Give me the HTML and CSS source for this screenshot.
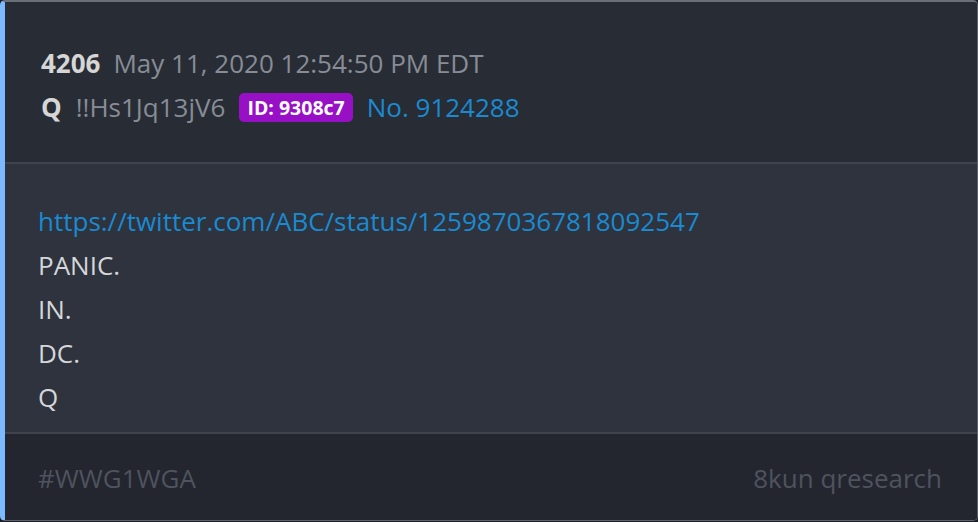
FILE: index.html
```html
<!DOCTYPE html>
<html lang="en">
<head>
  <meta charset="UTF-8" />
  <title>Q Drop 4206</title>
  <meta name="viewport" content="width=device-width, initial-scale=1" />
  <link rel="stylesheet" href="styles.css">
</head>
<body>

  <article class="drop">
    <header class="drop-head">
      <div class="fila">
        <span class="numero">4206</span>
        <span class="fecha">May 11, 2020 12:54:50 PM EDT</span>
      </div>
      <div class="fila">
        <span class="autor">Q</span>
        <span class="trip">!!Hs1Jq13jV6</span>
        <span class="id-badge">ID: 9308c7</span>
        <a class="post-no" href="#">No. 9124288</a>
      </div>
    </header>

    <section class="drop-body">
      <p><a href="#">https://twitter.com/ABC/status/1259870367818092547</a></p>
      <p>PANIC.</p>
      <p>IN.</p>
      <p>DC.</p>
      <p>Q</p>
    </section>

    <footer class="drop-foot">
      <span>#WWG1WGA</span>
      <span>8kun qresearch</span>
    </footer>
  </article>

</body>
</html>
```

FILE: styles.css
```css
body {
  margin: 0;
  background: #1c1f25;
  font-family: "Open Sans", sans-serif;
  font-size: 26px;
  line-height: 44px;
}
.drop {
  width: 978px;
  height: 521px;
  box-sizing: border-box;
  border: 1px solid #5c616b;
  border-top: 2px solid #6a6f79;
  border-left: 5px solid #7cb9ff;
  border-radius: 5px;
  overflow: hidden;
  display: flex;
  flex-direction: column;
}
.drop-head {
  background: #282c34;
  padding: 39px 36px 33px;
  border-bottom: 2px solid #3e434d;
}
.fila {
  display: flex;
  align-items: center;
}
.numero {
  font-weight: bold;
  color: #d6d6d6;
  margin-right: 13px;
}
.fecha {
  color: #878c97;
}
.autor {
  font-weight: bold;
  color: #d6d6d6;
  margin-right: 14px;
}
.trip {
  color: #878c97;
  margin-right: 14px;
}
.id-badge {
  background: #9810c6;
  color: #fff;
  font-weight: bold;
  font-size: 19.5px;
  line-height: 29px;
  padding: 0 8px;
  border-radius: 5px;
  margin-right: 14px;
}
.post-no {
  color: #1a8ad1;
  text-decoration: none;
}
.drop-body {
  background: #2e333d;
  padding: 35px 33px 13px;
  border-bottom: 2px solid #3e434d;
  color: #d4d6da;
}
.drop-body p {
  margin: 0;
}
.drop-body a {
  color: #1a8ad1;
  text-decoration: none;
}
.drop-foot {
  flex: 1;
  background: #23262e;
  padding: 22px 35px 0 33px;
  display: flex;
  justify-content: space-between;
  color: #4e535e;
}
```
